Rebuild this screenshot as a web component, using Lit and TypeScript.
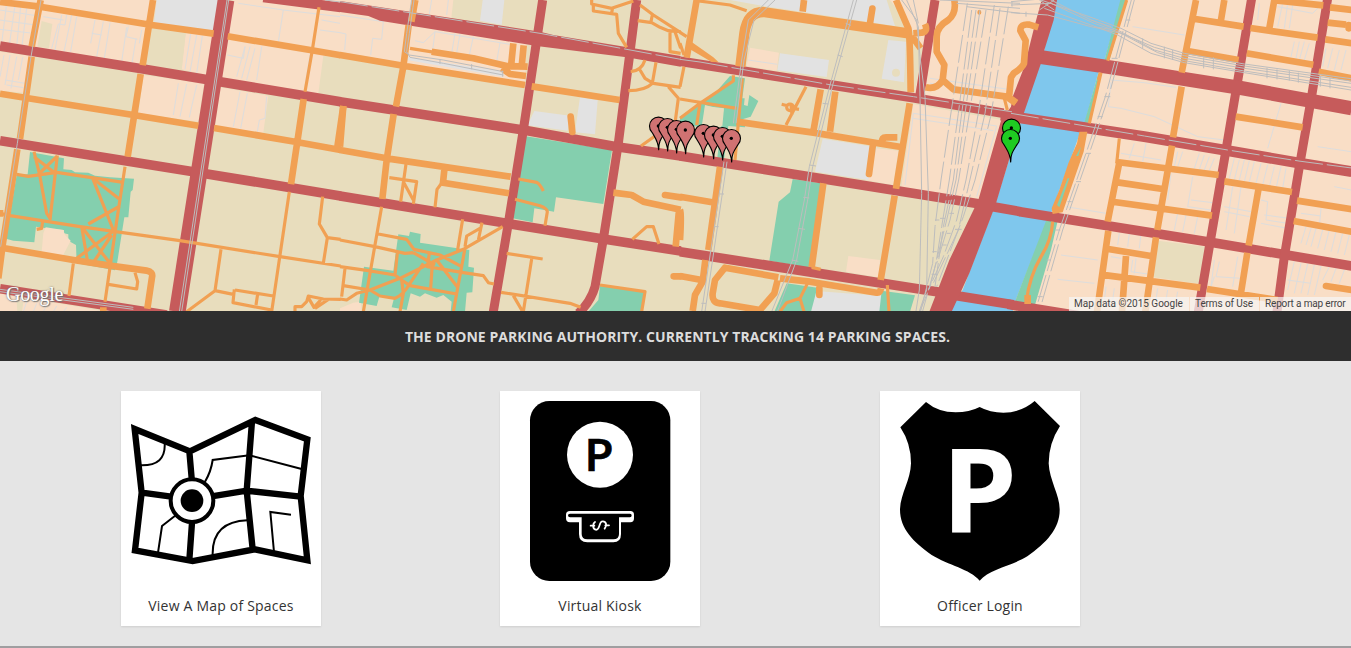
import { LitElement, html, svg, css } from "lit";
import { customElement } from "lit/decorators.js";

// Map geometry is stored in sectors; each sector has its own x origin.
const ORIGINS = [0, 1020, 2040, 3033];

interface Layer {
  cls: string;
  d: string[];
}

const LAYERS: Layer[] = [
  {
    cls: "peach",
    d: [
      "M0 0H470L455 90L430 205L0 150ZM557 100L640 105L617 225L545 208ZM0 155L95 168L72 278L0 272ZM430 225L612 250L595 365L415 340ZM700 0H1022V175L970 167L955 280L660 235ZM660 262L805 287L790 398L645 382ZM0 880L320 935H0Z",
      "M0 0H340L330 90L560 130L555 250L190 190L0 155ZM0 925L40 908L62 905L65 935H0Z",
      "M210 143L297 158L290 212L200 198ZM630 0H1000V345L700 300L730 140L690 80ZM700 312L965 360L897 602L663 566ZM590 445L655 452L640 555L556 540ZM505 768L600 780L595 832L498 815Z",
      "M-10 0H1020V935H30L-10 300Z",
    ],
  },
  {
    cls: "sand",
    d: [
      "M125 63L157 72L147 145L112 140ZM455 85L557 101L545 208L433 195ZM50 903L70 906L66 935H52ZM108 680L195 690L226 732L228 772L100 755Z",
      "",
      "",
      "M442 722L583 740L567 852L427 832Z",
    ],
  },
  {
    cls: "grey",
    d: [
      "M470 0H655L642 92L462 70Z",
      "M428 0H493L485 75L420 62ZM583 333L690 347L683 392L562 376ZM720 292L773 301L765 403L705 397ZM205 170L490 215V230L200 180Z",
      "M150 0H620L645 78L250 18ZM300 160L447 180L440 231L292 211ZM625 120L678 125L672 247L605 236ZM428 416L590 442L565 540L405 515ZM398 872L607 888L600 935H393Z",
      "",
    ],
  },
  {
    cls: "green",
    d: [
      "M90 456L192 475L190 508L215 510L225 517L265 518L285 527L330 532L402 536L398 570L392 575L385 652L373 652L352 785L345 811L230 790L228 735L205 722V703L192 700V690L160 688L108 680L103 727L40 722L18 716L50 525L83 523Z",
      "M553 408L816 450L790 612L648 592L642 635L583 625L578 667L518 655ZM175 703L207 708L210 695L242 702L240 728L388 750L385 800L402 803L397 877L380 878L375 935H332L335 905L310 885L290 893L255 880L240 890L212 880L200 930L155 922L162 895L118 890L110 918L57 908L72 800L160 812ZM780 858L915 875L905 935H745L775 900Z",
      "M150 228L195 235L187 295L194 295L192 315L203 318L208 285L235 303L212 350L190 357L175 365L195 372V382L145 378L132 480L112 472L130 330L75 315L65 380L0 375V350L100 285ZM338 537L422 550L388 803L268 782L296 605L330 577ZM320 850L412 863L393 935H283ZM605 872L705 886L690 935H598Z",
      "",
    ],
  },
  { cls: "sand", d: ["", "", "M636 218a12 12 0 1 0 24 0a12 12 0 1 0-24 0M75 318L132 325L127 378L72 370Z", ""] },
  { cls: "peach", d: ["M137 682L190 690L195 705L212 722L188 768L125 755L130 700Z", "", "", ""] },
  {
    cls: "water",
    d: ["", "", "", "M120 0H332L280 182L262 218L222 368L205 405L122 635L108 665L12 905L5 935H-190L-145 870L-50 620L30 365L80 190L100 150Z"],
  },
  {
    cls: "green",
    d: ["", "", "", "M328 0H346L295 182H280ZM262 220H272L237 368H220ZM210 400H220L190 500H172L205 430ZM105 663H140L120 750L72 915L12 905Z"],
  },
  {
    cls: "lots",
    d: [
      "M0 60L105 75M0 88L100 100M20 10L5 130M45 15L28 135M62 20L50 140M80 25L65 145M0 30L115 48M12 165L0 230M30 165L15 255M50 170L33 265M68 172L55 240M15 240L75 250M20 255L70 263M200 45L195 75L175 72L155 145M215 45L192 155M230 50L212 155M185 45L165 150M130 50L190 60M285 60L272 130M310 65L290 170M330 68L312 180M275 100L305 105M385 80L378 110L412 118M408 115L395 195M380 82L365 185M425 90L418 130M590 105L570 215M607 108L590 220M572 102L555 208M535 250L520 345M560 252L540 350M590 255L575 320L568 352M715 10L850 30L1020 50M850 30L835 125M965 60L1020 70M960 90L1020 98M682 165L730 175L735 140M750 140L725 235M765 145L740 240M735 140L710 230M785 140L770 240M720 275L700 380M742 280L722 385M800 290L795 355L778 360L772 395M930 165L915 260M80 905L70 935M110 910L100 935M140 915L130 935M170 918L160 935M200 922L190 935",
      "M0 45L130 65L125 118L98 115L92 165M0 98L18 102L14 150M325 0L320 45M275 0L268 42M285 95L278 150M345 100L335 160M360 100L350 160M400 110L388 165M225 122L250 128L285 95L480 128L470 185M480 128L520 135",
      "M205 180L292 193M700 340L950 378L890 590M700 340L675 555M700 355L940 392M750 235L1000 270M750 250L990 285",
      "M365 80L520 105M300 240L400 248L495 262M300 245L292 320L330 325L430 350L560 410L640 420M810 310L770 445M920 440L1020 455M745 10L740 60M815 10L800 80M830 10L820 85M845 15L835 85M800 20L905 40L925 20M850 125L840 170M865 125L855 175M880 125L865 180M895 130L880 180M945 145L935 200M965 145L950 205M985 150L970 210M1005 150L990 210M370 430L355 475M405 430L395 485M330 460L450 480M500 455L490 500M515 455L500 500M565 460L550 505M580 465L565 508M595 470L580 510M610 475L595 510M670 475L655 535M685 480L670 540M700 480L685 540M715 482L700 545M730 485L715 545M750 490L735 550M770 495L755 555M790 500L775 560M810 500L795 565M825 505L815 565M545 530L530 620L600 630M540 600L605 608M480 520L470 600M500 640L490 690M525 645L515 695M560 650L550 700M640 620L720 635M640 635L715 650M665 560L645 690M690 560L670 700M750 600L770 605L765 660L830 670M760 645L835 655M750 670L830 685M870 640L930 648M930 625L925 680M885 680L870 730M900 685L885 735M915 685L900 740M935 690L920 745M955 690L940 750M975 695L960 755M995 700L980 760M1015 705L1000 765M150 765L260 780M140 838L250 850M165 620L285 640M355 700L350 740M325 700L320 735M390 700L385 745M300 770L330 775M365 780L360 815L410 822M375 775L370 820M610 780L600 860M625 785L615 830L690 835M610 830L600 860M680 770L665 860M850 785L830 870M870 790L850 880M890 792L870 880M910 795L890 885M930 798L910 885M955 800L935 840M975 805L960 845M1000 810L985 850M285 860L280 900M310 865L305 900M440 865L435 900M470 870L465 900M500 875L495 900M985 520L1020 525M970 560L1020 570M830 840L900 850",
    ],
  },
  {
    cls: "red",
    d: [
      "M0 138L430 207L615 238L1022 305M0 422L580 515L1022 588M0 866L500 945M790 -8L1022 22",
      "M0 305L550 390L830 440L1022 468M0 588L500 670L790 717L1022 753",
      "M0 184L455 255L700 293L970 340M0 468L900 612M930 619L1022 635M0 755L780 877M830 887L1000 914",
      "M27 635L590 725L1022 798M-10 913L220 950",
    ],
  },
  {
    cls: "red r27",
    d: [
      "",
      "M608 0L550 390L505 670L460 935M890 0L835 430L790 717L765 860Q752 905 715 940",
      "M765 0L718 295",
      "M722 -5L645 450L595 740L562 935M950 -5L900 300L865 500L820 770L798 935",
    ],
  },
  { cls: "red r36", d: ["", "", "", "M-30 345L400 410L650 452L870 490L1022 515"] },
  { cls: "red r42", d: ["", "", "", "M80 170L300 202L690 264L1022 325"] },
  { cls: "red r50", d: ["M678 0L532 935", "", "", ""] },
  {
    cls: "redfill",
    d: [
      "",
      "M0 3L600 95L640 105L1022 168V200L860 172L590 138L120 62L85 48L0 36Z",
      "",
      "M92 0H138L128 60L100 150L90 190L40 335L27 370L-45 610L-60 650L-125 820L-148 870L-178 935H-245L-185 780L-110 625L-98 600L-30 362L0 320L5 290L40 200L70 80Z",
    ],
  },
  {
    cls: "road",
    d: [
      "M0 6L120 20L455 75L641 101M683 109L935 151L1022 166M122 0L95 140M95 170L60 416M52 448L8 735L-5 835M459 0L428 196M422 222L383 470M0 281L75 293L400 345L595 377M642 384L885 425L1022 450M911 297L873 553M1030 318L1010 455M0 630V650M5 743L225 781L330 797L440 812Q460 815 456 832L442 926M300 932H320",
      "M226 0L214 65M206 75L190 200L168 320M161 342L140 480L127 597M0 165L190 197L555 255M575 259L839 300M10 318L0 440M0 450L140 475L512 530M313 510L309 548L507 580M275 155L400 175L500 198L563 200M520 130L513 200M551 136L545 200M485 205L510 222L558 228M820 578L875 585L910 605L1022 629M1017 630L1007 740",
      "M648 0L685 85Q690 100 692 277M689 310L648 566M644 587L602 840M372 0L368 35M50 0L20 173M700 100L725 98Q745 95 735 72M695 108L722 145M170 365L400 398L658 440M422 268L400 395M466 275L450 395M652 412H618Q605 412 605 430M120 500L85 750M0 590L105 608M0 630Q5 640 0 720M430 550L395 802M76 780L68 845L45 885L38 933M0 828L65 840M295 832L135 803L105 840L98 880Q95 908 120 910L240 930L283 880L293 840M300 835L390 845L590 878Q600 880 603 865M823 0Q830 40 805 60Q770 80 770 110V155L793 195L788 240Q770 270 737 262M788 240L820 268L980 290L1008 310",
      "M82 82L55 74Q28 70 28 92L44 122L39 190Q35 202 8 220L0 232L-6 292L16 308M555 0L512 218M640 0L630 60M553 57L698 80M718 84L920 113M790 0L775 85M780 0L937 16M957 22L1022 30M950 68L1005 74M943 118L1022 130M707 160L907 194M923 215L1022 235M525 152L683 180M512 260L486 412M674 350L875 382M483 437L439 690M325 487L290 665M317 486L623 525M320 547L455 567M310 606L603 647M640 544L843 576M742 570L713 737M858 602L1022 628M848 663L1022 695M435 712L403 935M292 692L258 935M287 746L420 768M345 768L333 935M270 824L568 863M588 867L800 900M709 758L690 878M50 885V912",
    ],
  },
  {
    cls: "road round",
    d: [
      "",
      "M692 350L697 396M975 585L1022 592M1001 829H1022",
      "M577 26L570 70M578 440L567 522M418 865V885",
      "M945 858L1022 870M1013 85V75",
    ],
  },
  { cls: "road wide", d: ["", "", "M181 200L193 100Q202 36 250 36L450 66L690 101", ""] },
  {
    cls: "orangefill",
    d: ["", "", "M892 37a6 8 0 1 0 12 0a6 8 0 1 0-12 0M34 125L100 172L116 187L95 186L30 148Z", "M205 395H229L218 455L155 637L125 642L122 625L145 570L172 490L198 430Z"],
  },
  { cls: "green", d: ["", "", "", "M170 535H175L145 622L138 615ZM210 440L202 468L195 468Z"] },
  {
    cls: "path",
    d: [
      "M957 22L937 150L915 275M868 575L815 935M375 500L352 650L315 905M50 523L85 529L170 517L370 547M102 455L118 520L140 640L150 655M172 466L150 660M102 470L160 515M172 468L115 523M278 535L358 597M278 535L340 690M265 672L360 618M0 640L30 647L240 680L540 722L840 770L1022 798M128 662L125 685L110 688M245 680L262 780M245 680L330 790M345 690L230 775M335 705L283 783M220 790L207 888M325 853L410 867L413 845L405 818M663 748L645 872L700 883M705 870L820 888M703 868L699 908L815 930M773 882L768 915M645 872L560 935M968 590L958 672L982 713L970 790M982 713L1022 718M885 935V920H905L920 905L925 888L970 897L1022 898M925 893L942 922L962 900M945 925L985 898",
      "M210 145L285 157M303 552L291 568L285 622M148 533L230 545L220 612M198 492L182 605M190 545L220 600M535 537L590 547Q600 552 610 573M525 598L600 617Q622 625 622 635L615 677M125 620L70 935M0 720L105 740L195 760L220 758M115 702L200 718L222 748L300 765L365 800M368 658L352 755M375 740L380 708L425 682M426 668L415 720M488 680L370 748L290 780L180 835L90 870L50 880L20 900L0 897M0 800L85 812L165 825L185 840L210 857L350 882M172 760L165 825M375 745L340 935M10 857L90 870L120 888L165 895Q190 885 210 850L250 790M220 758L285 795M268 760L262 800L370 818L430 827L445 848L462 852M277 790L272 865M290 780L355 865M185 840L190 880L180 935M15 805L5 890M500 760L608 777M575 777L550 935M483 877L690 910L722 922M520 887L548 935M780 855L915 875L905 935M755 0V12L815 25L880 3M760 12V33L830 43L835 100L860 142M818 22L815 40M900 15L940 45L1022 98M893 62L935 68L960 82L985 92L1022 95M937 45L933 65M990 95V155L1022 160M1005 95L1022 145M915 180Q905 212 872 215M900 210L915 235L940 250L1022 262M948 187L937 250M937 250Q915 272 865 272M985 260L1015 295L1005 370M903 438L945 408M877 718L920 680H940L957 732",
      "M50 2L150 15L200 32M0 97L20 110M0 130L12 165M12 200L0 260M160 226V243L60 310L0 355M0 297L170 325M60 310L50 375M187 235L165 480M378 260L318 375M305 313L325 318M340 325L357 328M333 315L336 345M320 322a10 10 0 1 0 20 0a10 10 0 1 0-20 0M395 802L422 808M385 845L360 895L320 908L300 935M360 895L372 935M622 855L627 933M973 295L982 330",
      "M347 0L290 182M270 218L235 370M325 415L317 490M125 665Q122 720 90 770Q55 830 46 905M268 218L262 240",
    ],
  },
  {
    cls: "rail",
    d: [
      "M123 0L93 170L52 430L2 740M681 0L538 935M686 0L545 935M0 868L400 922M0 875L400 928M975 0L1020 6",
      "M222 0L208 100L200 155L210 172L310 190L490 225M215 0L200 100L193 155L208 165L310 180L490 215M300 178V192M395 192V208M488 212V230",
      "M520 0L450 255L388 500L373 600L338 780L275 935M530 0L458 255L398 500L383 600L350 780L292 935M497 70L513 76M473 165L488 170M428 310L445 312M388 495L408 498M370 592L388 594M355 685L375 688M335 780L355 784M132 485L65 935M141 485L75 935M120 582H132M102 680H116M64 910H78M265 0L205 60L185 180L160 370M285 0L222 60L192 180L168 370M665 0L710 60L720 170L735 290L745 580L740 870L718 933M680 0L715 80L720 290L725 580L718 870L708 933M700 0L715 70M780 0L1020 10M830 10L1020 25M860 20L1020 40M0 178L60 186",
      "M0 5L110 -5L240 60L320 90L430 150L520 175L700 205L1020 250M0 15L120 10L250 70L320 95L430 142L520 167L700 198L1020 243M0 38L110 45L240 80L330 100L440 158L520 182L700 213L1020 262M90 0L240 52L330 85L420 130L520 160L700 192L1020 236M100 25L240 75L320 105L420 160L520 188L700 218L1020 270M395 115V145M460 140V175M485 150V180M578 172V205M607 172V208M768 203V235M798 208V238M835 212V242M862 218V248M928 228V260M957 232V265M85 0L130 30M85 30L130 0M45 35V50M3 5V20M240 60L300 80M250 80L310 90",
    ],
  },
  {
    cls: "rail dashed",
    d: [
      "",
      "M0 5L600 100L1022 178",
      "M60 186L455 255L700 290L1000 336M862 10L812 345L783 540L765 680L758 790L722 933M875 30L835 340L808 540L785 680L768 790L728 933M888 30L845 340L820 540L790 680L765 860M900 30L855 340L828 540L800 660L750 860L720 933M918 30L868 340L836 540L810 660L770 790M943 15L895 340L858 540L830 660L790 770L745 870M960 25L915 340L865 560L835 690L755 860M985 20L932 350L885 540L850 650L770 860M765 660H778M780 655H795M808 640H822M825 688H845M785 735H800M757 755H770M800 700H812M755 823H772",
      "M0 340L400 408L650 450L870 484L1022 504M361 0L283 290L225 460L145 690L80 910M370 0L293 290L235 460L155 690L92 910M345 60H358M302 175H320M280 290H298M260 350H275M225 460H240M195 545H210M170 605H182M133 690H148M107 780H120M80 890H95",
    ],
  },
];

const PINS: Array<[number, number, string]> = [
  [1975, 378, "taken"],
  [2002, 382, "taken"],
  [2029, 388, "taken"],
  [2056, 390, "taken"],
  [2110, 400, "taken"],
  [2140, 405, "taken"],
  [2167, 409, "taken"],
  [2194, 415, "taken"],
  [3034, 384, "free"],
  [3031, 415, "free"],
];

@customElement("parking-map")
export class ParkingMap extends LitElement {
  static styles = css`
    :host {
      display: grid;
      height: 311px;
      overflow: hidden;
      background: #e8ddbd;
      position: relative;
    }
    .canvas {
      display: block;
      width: 1351px;
      height: 311px;
    }
    path { fill: none; stroke-linejoin: round; }
    .peach { fill: #f9dec6; }
    .sand { fill: #e8ddbd; }
    .grey { fill: #e2e2e2; }
    .green { fill: #84cfae; }
    .water { fill: #7fc7ed; }
    .redfill { fill: #c65b5b; }
    .orangefill { fill: #f1a053; }
    .lots { stroke: #dddddd; stroke-width: 3; }
    .red { stroke: #c65b5b; stroke-width: 29; }
    .r27 { stroke-width: 27; }
    .r36 { stroke-width: 33; }
    .r42 { stroke-width: 42; }
    .r50 { stroke-width: 50; }
    .road { stroke: #f1a053; stroke-width: 20; }
    .round { stroke-linecap: round; }
    .road.wide { stroke-width: 31; }
    .path { stroke: #f1a053; stroke-width: 9.5; }
    .rail { stroke: #bdbdbd; stroke-width: 3; }
    .dashed { stroke-dasharray: 84 12; }
    .pin { stroke: #000; stroke-width: 3.4; }
    .taken { fill: #d07272; }
    .free { fill: #1fcb22; }
    .logo {
      position: absolute;
      left: 6px;
      bottom: 5px;
      font: 20px/24px "Liberation Serif", serif;
      color: #fff;
      text-shadow: 0 0 2px #666, 1px 1px 1px #777;
      letter-spacing: -0.3px;
    }
    .credits {
      position: absolute;
      right: 0;
      bottom: 0;
      display: flex;
      gap: 1px;
      font: 10px/14px Roboto, sans-serif;
      color: #444;
    }
    .credits span {
      background: rgba(245, 245, 245, 0.72);
      padding-left: 5px;
      white-space: nowrap;
      box-sizing: border-box;
    }
    .data { width: 120px; }
    .terms { width: 69px; letter-spacing: -0.1px; }
    .report { width: 91px; letter-spacing: -0.16px; }
  `;

  render() {
    return html`
      <svg class="canvas" viewBox="0 0 4053 933" preserveAspectRatio="none">
        ${LAYERS.map((layer) =>
          layer.d.map((d, i) =>
            d ? svg`<path class=${layer.cls} transform=${`translate(${ORIGINS[i]} 0)`} d=${d}></path>` : null
          )
        )}
        ${PINS.map(
          ([x, y, kind]) => svg`<g transform=${`translate(${x} ${y})`}>
            <path class=${"pin " + kind} d="M1 71C0 46 -8 38 -19 19A27 27 0 1 1 20 19C8 38 1 46 1 71Z"></path>
            <circle r="5"></circle>
          </g>`
        )}
      </svg>
      <div class="logo">Google</div>
      <div class="credits">
        <span class="data">Map data ©2015 Google</span>
        <span class="terms">Terms of Use</span>
        <span class="report">Report a map error</span>
      </div>
    `;
  }
}

const mapIcon = svg`<svg class="icon" viewBox="63 63 540 540">
  <g fill="none" stroke="#000">
    <path stroke-width="19" stroke-miterlimit="8" d="M74 147L240 214L436 120L592 178L572 348L592 541L434 508L248 543L75 511L95 338ZM426 124L410 332L428 508M238 214L248 330M248 400L238 541M96 338L200 352M300 350L410 332L572 350"/>
    <path stroke-width="6" d="M164 190Q168 258 92 256M285 305Q303 275 308 240L418 226L575 267M205 400L156 438L144 518M308 526Q305 425 412 421M492 516L481 396L543 404"/>
  </g>
  <circle cx="246" cy="362" r="64" fill="#fff" stroke="#000" stroke-width="12"/>
  <circle cx="246" cy="362" r="34"/>
</svg>`;

const kioskIcon = svg`<svg class="icon" viewBox="60 63 540 540">
  <rect x="120" y="63" width="421" height="540" rx="58"/>
  <circle cx="330" cy="224" r="99" fill="#fff"/>
  <text class="letter semi" transform="translate(283 273) scale(1.04 1)" font-size="138">P</text>
  <g fill="none" stroke="#fff" stroke-linecap="round">
    <path fill="#fff" stroke-width="6" d="M240 396H421Q429 396 429 404V415Q429 424 421 424H390V462Q390 484 370 484H292Q270 484 270 462V424H240Q231 424 231 415V404Q231 396 240 396Z"/>
    <path fill="#000" stroke="none" d="M240 401H420Q425 401 425 406Q425 412 420 412H240Q234 412 234 406Q234 401 240 401ZM275 412H387V462Q387 478 370 478H292Q275 478 275 462Z"/>
    <path stroke-width="5.5" d="M302 437H310M349 436H357M317 449C307 446 308 430 315 426M317 449C331 452 326 424 337 424C349 423 352 437 344 446M310 437H313M346 436H349"/>
  </g>
</svg>`;

const badgeIcon = svg`<svg class="icon" viewBox="60 63 540 540">
  <path d="M168 66Q205 97 257 97Q298 97 329 81Q360 98 400 98Q455 97 494 63L570 138Q536 190 536 250C538 300 569 345 569 388C570 445 530 488 472 529C430 556 358 567 329 602C300 567 235 556 185 525C130 485 90 448 90 388C92 340 122 300 123 250Q123 190 91 142Z"/>
  <text class="letter bold" transform="translate(214 458) scale(1.035 1)" font-size="351">P</text>
</svg>`;

@customElement("app-root")
export class AppRoot extends LitElement {
  static styles = css`
    :host {
      display: flex;
      flex-direction: column;
      height: 648px;
      overflow: hidden;
      background: #e5e5e5;
      font-family: "Open Sans", sans-serif;
      font-size: 14px;
      line-height: 20px;
      color: #333;
    }
    .banner {
      height: 50px;
      box-sizing: border-box;
      padding: 16px 0 14px 4px;
      background: #2e2e2e;
      color: #ddd;
      font-weight: 700;
      letter-spacing: 0.065px;
      text-align: center;
      text-transform: uppercase;
    }
    .cards {
      flex: 1;
      display: grid;
      grid-template-columns: 379px 380px 380px;
      align-items: start;
      padding: 30px 0 0 121px;
    }
    .card {
      width: 180px;
      padding: 10px;
      background: #fff;
      box-shadow: 0 1px 2px rgba(0, 0, 0, 0.1);
      text-align: center;
    }
    .icon { display: block; width: 180px; height: 180px; }
    .label { padding-top: 15px; letter-spacing: 0.2px; }
    .letter { font-family: "Open Sans", sans-serif; }
    .semi { font-weight: 600; fill: #000; stroke: #000; stroke-width: 2; }
    .bold { font-weight: 700; fill: #fff; }
    .edge { height: 2px; background: #9f9ea0; }
  `;

  render() {
    return html`
      <parking-map></parking-map>
      <div class="banner">The Drone Parking Authority. Currently tracking 14 parking spaces.</div>
      <div class="cards">
        <div class="card">${mapIcon}<div class="label">View A Map of Spaces</div></div>
        <div class="card">${kioskIcon}<div class="label">Virtual Kiosk</div></div>
        <div class="card">${badgeIcon}<div class="label">Officer Login</div></div>
      </div>
      <div class="edge"></div>
    `;
  }
}
